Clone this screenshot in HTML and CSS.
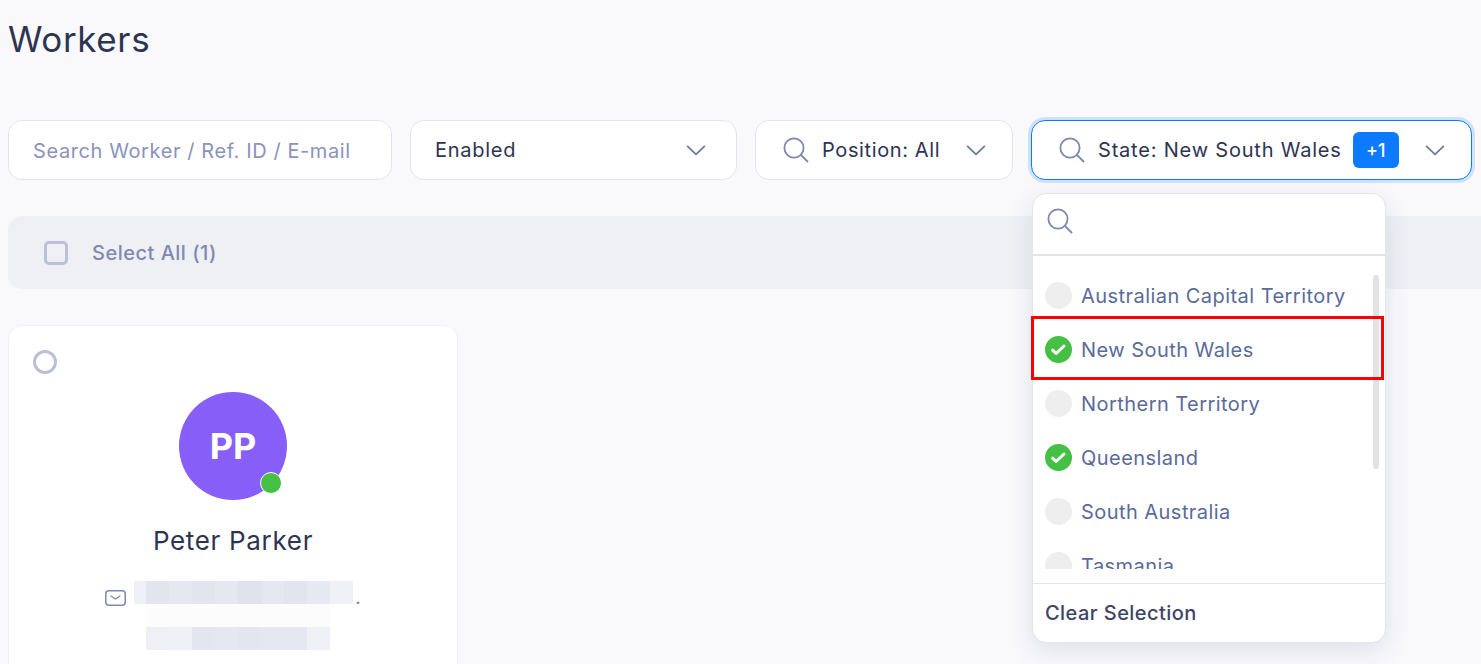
FILE: index.html
```html
<!DOCTYPE html>
<html lang="en">
<head>
<meta charset="utf-8">
<title>Workers</title>
<link rel="stylesheet" href="styles.css">
</head>
<body>
<svg class="defs" width="0" height="0" aria-hidden="true">
  <symbol id="i-search" viewBox="0 0 26 26"><circle cx="11" cy="11" r="9.6" fill="none" stroke="currentColor" stroke-width="1.8"/><path d="M18 18l6.5 6.5" fill="none" stroke="currentColor" stroke-width="1.8" stroke-linecap="round"/></symbol>
  <symbol id="i-chev" viewBox="0 0 20 11"><path d="M1.6 1.4L10 9.4l8.4-8" fill="none" stroke="currentColor" stroke-width="1.8" stroke-linecap="round" stroke-linejoin="round"/></symbol>
  <symbol id="i-check" viewBox="0 0 27 27"><circle cx="13.5" cy="13.5" r="13.5" fill="#46bf45"/><path d="M7.6 14.2l3.5 3.3 7.9-7.5" fill="none" stroke="#fff" stroke-width="3" stroke-linecap="round" stroke-linejoin="round"/></symbol>
</svg>
<main class="page">
  <h1 class="title">Workers</h1>
  <div class="filters">
    <div class="field field-search"><span class="placeholder">Search Worker / Ref. ID / E-mail</span></div>
    <div class="field field-status"><span class="value">Enabled</span><svg class="chev"><use href="#i-chev"/></svg></div>
    <div class="field field-position"><svg class="search"><use href="#i-search"/></svg><span class="value value-position">Position: All</span><svg class="chev"><use href="#i-chev"/></svg></div>
    <div class="state-wrap">
      <div class="field field-state"><svg class="search"><use href="#i-search"/></svg><span class="value value-state">State: New South Wales</span><span class="badge">+1</span><svg class="chev"><use href="#i-chev"/></svg></div>
      <div class="menu">
        <div class="menu-search"><svg class="search"><use href="#i-search"/></svg></div>
        <div class="menu-list">
          <div class="scrollbar"></div>
          <div class="option"><span class="dot-off"></span><span class="option-text">Australian Capital Territory</span></div>
          <div class="option"><svg class="dot-on"><use href="#i-check"/></svg><span class="option-text">New South Wales</span></div>
          <div class="option"><span class="dot-off"></span><span class="option-text">Northern Territory</span></div>
          <div class="option"><svg class="dot-on"><use href="#i-check"/></svg><span class="option-text">Queensland</span></div>
          <div class="option"><span class="dot-off"></span><span class="option-text">South Australia</span></div>
          <div class="option"><span class="dot-off"></span><span class="option-text">Tasmania</span></div>
        </div>
        <div class="menu-foot">Clear Selection</div>
        <div class="marker"></div>
      </div>
    </div>
  </div>
  <div class="select-bar"><span class="checkbox"></span><span class="select-label">Select All (1)</span></div>
  <article class="card">
    <span class="radio"></span>
    <div class="avatar">PP<span class="status"></span></div>
    <div class="name">Peter Parker</div>
    <div class="contact">
      <svg class="mail" viewBox="0 0 21 16"><rect x="0.8" y="0.8" width="19.4" height="14.4" rx="3" fill="none" stroke="#7d88b5" stroke-width="1.5"/><path d="M6 6l4.5 3L15 6" fill="none" stroke="#7d88b5" stroke-width="1.3" stroke-linecap="round" stroke-linejoin="round"/></svg>
      <div class="blur">
        <svg class="blur-img" viewBox="0 0 219 69" width="219" height="69">
          <g shape-rendering="crispEdges">
            <rect x="0" y="0" width="12" height="23" fill="#eef0f5"/>
            <rect x="12" y="0" width="23" height="23" fill="#e2e5ee"/>
            <rect x="35" y="0" width="23" height="23" fill="#e6e8f0"/>
            <rect x="58" y="0" width="23" height="23" fill="#e2e5ee"/>
            <rect x="81" y="0" width="23" height="23" fill="#e6e8f0"/>
            <rect x="104" y="0" width="23" height="23" fill="#e0e3ec"/>
            <rect x="127" y="0" width="23" height="23" fill="#e5e8f0"/>
            <rect x="150" y="0" width="23" height="23" fill="#e2e5ee"/>
            <rect x="173" y="0" width="23" height="23" fill="#e6e9f2"/>
            <rect x="196" y="0" width="23" height="23" fill="#f0f1f6"/>
            <rect x="12" y="23" width="184" height="23" fill="#fcfcfd"/>
            <rect x="12" y="46" width="23" height="23" fill="#eff0f5"/>
            <rect x="35" y="46" width="23" height="23" fill="#f0f1f6"/>
            <rect x="58" y="46" width="23" height="23" fill="#e4e6ef"/>
            <rect x="81" y="46" width="23" height="23" fill="#e5e8f0"/>
            <rect x="104" y="46" width="23" height="23" fill="#e3e6ee"/>
            <rect x="127" y="46" width="23" height="23" fill="#e5e8f1"/>
            <rect x="150" y="46" width="23" height="23" fill="#e5e8f1"/>
            <rect x="173" y="46" width="23" height="23" fill="#f0f1f6"/>
          </g>
        </svg>
        <span class="blur-end">.</span>
      </div>
    </div>
  </article>
</main>
</body>
</html>
```
FILE: styles.css
```css
* { box-sizing: border-box; }
html, body { margin: 0; padding: 0; height: 664px; overflow: hidden; }
body { background: #f9f9fc; font-family: Inter, "Liberation Sans", sans-serif; color: #2d3452; }
.defs { display: block; height: 0; }
.page { padding: 16px 0 0 8px; height: 664px; overflow: hidden; }
.title { margin: 0; font-size: 35px; line-height: 46px; font-weight: 400; letter-spacing: .62px; color: #2d3452; }

.filters { display: flex; gap: 18px; margin-top: 58px; height: 60px; font-size: 20px; }
.field { display: flex; align-items: center; height: 60px; background: #fff; border: 1px solid #e2e3f0; border-radius: 14px; }
.field-search { width: 384px; padding-left: 24px; }
.field-status { width: 327px; padding: 0 30px 0 24px; justify-content: space-between; }
.field-position { width: 258px; padding: 0 26px 0 27px; }
.state-wrap { position: relative; width: 441px; }
.field-state { width: 441px; padding: 0 26px 0 27px; border: 1.5px solid #0d7bff; box-shadow: 0 0 0 3px #cfe2fb; }
.placeholder { padding-top: 2px; color: #8a93bb; letter-spacing: .6px; white-space: nowrap; }
.value { color: #2d3452; letter-spacing: .72px; white-space: nowrap; }
.value-position { letter-spacing: .62px; }
.value-state { letter-spacing: .8px; }
.search { width: 26px; height: 26px; color: #7d88b0; flex: none; margin-right: 13px; }
.chev { width: 20px; height: 11px; color: #6f7a9f; flex: none; }
.field-position .chev, .field-state .chev { margin-left: auto; }
.badge { margin-left: 11px; width: 46px; height: 36px; border-radius: 6px; background: #0d7bff; color: #fff; font-size: 18px; font-weight: 500; display: flex; align-items: center; justify-content: center; flex: none; }

.menu { position: absolute; z-index: 5; left: 1px; top: 73px; width: 354px; height: 450px; background: #fff; border: 1px solid #e4e4ea; border-radius: 14px; box-shadow: 0 8px 24px rgba(90, 100, 140, .16); display: flex; flex-direction: column; }
.menu-search { height: 62px; flex: none; padding: 14px 0 0 14px; border-bottom: 2px solid #e4e4e8; }
.menu-list { position: relative; height: 313px; margin-bottom: 14px; flex: none; padding-top: 12px; overflow: hidden; }
.scrollbar { position: absolute; top: 19px; right: 6px; width: 6px; height: 194px; border-radius: 3px; background: #e3e3e3; }
.option { display: flex; align-items: center; height: 54px; padding-left: 12px; font-size: 20px; color: #5a6a9a; white-space: nowrap; }
.option-text { padding-top: 2px; letter-spacing: .45px; }
.dot-off { width: 27px; height: 27px; border-radius: 50%; background: #eeeeee; flex: none; margin-right: 9px; }
.dot-on { width: 27px; height: 27px; flex: none; margin-right: 9px; }
.marker { position: absolute; left: -2px; top: 122px; width: 353px; height: 64px; border: 3px solid #ff0000; }
.menu-foot { flex: 1; border-top: 1px solid #e2e3ec; padding: 17px 0 0 12px; font-size: 20px; font-weight: 500; letter-spacing: .45px; line-height: 24px; color: #3d4566; }

.select-bar { display: flex; align-items: center; height: 73px; margin-top: 36px; padding-left: 36px; background: #eff0f4; border-radius: 14px 0 0 14px; }
.checkbox { width: 24px; height: 24px; border: 3px solid #b9c1d6; border-radius: 5px; flex: none; }
.select-label { margin-left: 24px; font-size: 20px; font-weight: 500; letter-spacing: .5px; color: #8088b2; }

.card { position: relative; width: 450px; height: 400px; margin-top: 36px; padding-top: 66px; background: #fff; border: 1px solid #f0f0f5; border-radius: 14px; display: flex; flex-direction: column; align-items: center; }
.radio { position: absolute; left: 24px; top: 24px; width: 24px; height: 24px; border: 3px solid #b9c1d6; border-radius: 50%; }
.avatar { position: relative; width: 108px; height: 108px; border-radius: 50%; background: #875ef8; color: #fff; font-size: 36px; font-weight: 700; display: flex; align-items: center; justify-content: center; }
.status { position: absolute; right: 5px; bottom: 6px; width: 22px; height: 22px; border-radius: 50%; background: #46bf45; border: 1px solid #fff; }
.name { margin-top: 25px; font-size: 26px; line-height: 32px; letter-spacing: .67px; color: #2d3452; }
.contact { display: flex; align-items: flex-start; margin-top: 24px; }
.mail { width: 21px; height: 16px; margin-top: 9px; margin-right: 8px; flex: none; }
.blur { display: flex; align-items: flex-start; }
.blur-img { display: block; flex: none; }
.blur-end { margin: 5px 0 0 2px; line-height: 22px; font-size: 20px; color: #7d88b0; }
```
